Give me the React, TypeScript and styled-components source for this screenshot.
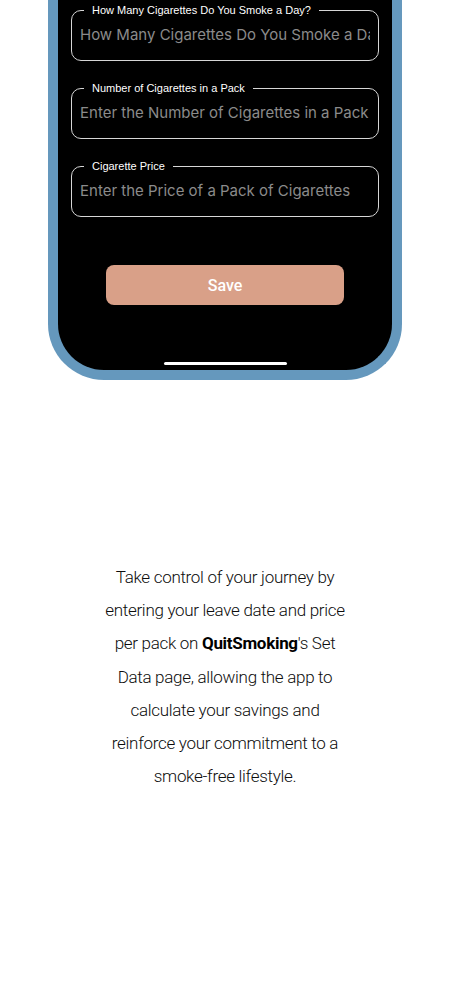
import React from 'react';
import styled, { createGlobalStyle } from 'styled-components';

const GlobalStyle = createGlobalStyle`
  html, body {
    margin: 0;
    padding: 0;
    background: #ffffff;
  }
  * {
    box-sizing: border-box;
  }
`;

const Page = styled.main`
  width: 450px;
  min-height: 1000px;
  display: flex;
  flex-direction: column;
  align-items: center;
`;

const PhoneFrame = styled.section`
  width: 354px;
  background: #000000;
  border: 10px solid #6598bd;
  border-top: 0;
  border-radius: 0 0 56px 56px;
  padding: 3px 3px 5px;
  display: flex;
  flex-direction: column;
  align-items: center;
`;

const Form = styled.form`
  width: 308px;
  display: flex;
  flex-direction: column;
  gap: 20px;
`;

const Field = styled.fieldset`
  margin: 0;
  padding: 0 8px 8px;
  border: 1px solid #d6d6d6;
  border-radius: 10px;
  min-width: 0;
`;

const Legend = styled.legend`
  margin-left: 4px;
  padding: 0 8px;
  font-family: 'Liberation Sans', Arial, sans-serif;
  font-size: 11px;
  line-height: 14px;
  color: #ffffff;
`;

const Input = styled.input`
  display: block;
  width: 100%;
  height: 35px;
  padding: 0;
  border: 0;
  outline: none;
  background: transparent;
  font-family: Inter, 'Liberation Sans', sans-serif;
  font-size: 15px;
  color: #ffffff;

  &::placeholder {
    color: #8b8b8b;
  }
`;

const SaveButton = styled.button`
  margin-top: 48px;
  width: 238px;
  height: 40px;
  border: 0;
  border-radius: 8px;
  background: #d9a088;
  color: #ffffff;
  font-family: Roboto, 'Liberation Sans', sans-serif;
  font-size: 16px;
  font-weight: 500;
  cursor: pointer;
`;

const HomeIndicator = styled.div`
  margin-top: 57px;
  width: 123px;
  height: 3px;
  border-radius: 2px;
  background: #ffffff;
`;

const Blurb = styled.p`
  margin: 181px 0 0;
  width: 256px;
  font-family: Roboto, 'Liberation Sans', sans-serif;
  font-size: 17px;
  font-weight: 300;
  letter-spacing: -0.3px;
  line-height: 33.2px;
  text-align: center;
  color: #0d0d0d;

  strong {
    font-weight: 700;
    color: #000000;
  }
`;

const fields = [
  {
    label: 'How Many Cigarettes Do You Smoke a Day?',
    placeholder: 'How Many Cigarettes Do You Smoke a Day?',
  },
  {
    label: 'Number of Cigarettes in a Pack',
    placeholder: 'Enter the Number of Cigarettes in a Pack',
  },
  {
    label: 'Cigarette Price',
    placeholder: 'Enter the Price of a Pack of Cigarettes',
  },
];

function App() {
  return (
    <Page>
      <GlobalStyle />
      <PhoneFrame>
        <Form onSubmit={(e) => e.preventDefault()}>
          {fields.map((f) => (
            <Field key={f.label}>
              <Legend>{f.label}</Legend>
              <Input placeholder={f.placeholder} />
            </Field>
          ))}
        </Form>
        <SaveButton type="button">Save</SaveButton>
        <HomeIndicator />
      </PhoneFrame>
      <Blurb>
        Take control of your journey by entering your leave date and price
        per pack on <strong>QuitSmoking</strong>'s Set Data page, allowing the
        app to calculate your savings and reinforce your commitment to a
        smoke-free lifestyle.
      </Blurb>
    </Page>
  );
}

export default App;
